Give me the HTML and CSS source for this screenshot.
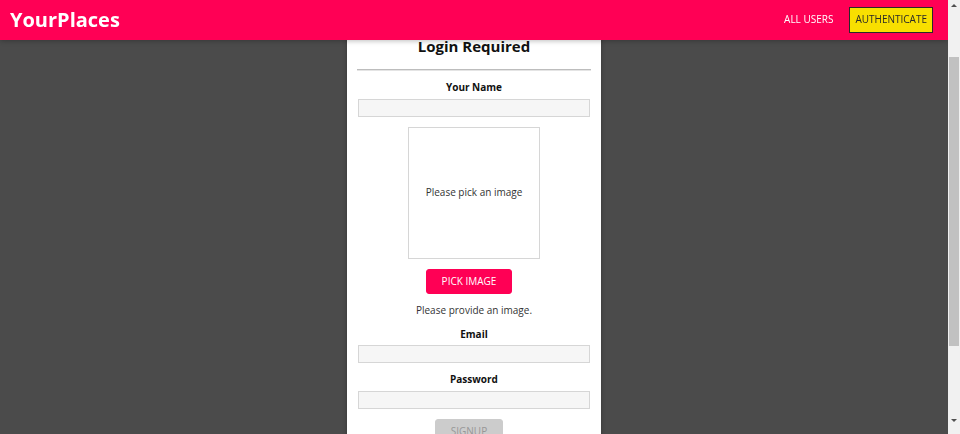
FILE: index.html
```html
<!DOCTYPE html>
<html lang="en">
<head>
<meta charset="utf-8">
<title>YourPlaces</title>
<link rel="stylesheet" href="styles.css">
</head>
<body>
<header class="main-header">
  <h1 class="brand"><a href="#">YourPlaces</a></h1>
  <nav class="main-nav">
    <ul class="nav-links">
      <li><a href="#" class="nav-link">ALL USERS</a></li>
      <li><a href="#" class="nav-link active">AUTHENTICATE</a></li>
    </ul>
  </nav>
</header>
<main class="page">
  <div class="card auth">
    <h2 class="auth-title">Login Required</h2>
    <hr class="divider">
    <form class="auth-form">
      <div class="form-control">
        <label class="field-label" for="name">Your Name</label>
        <input class="field-input" id="name" type="text">
      </div>
      <div class="form-control">
        <div class="image-upload">
          <div class="image-preview"><p class="preview-text">Please pick an image</p></div>
          <button type="button" class="btn">PICK IMAGE</button>
        </div>
        <p class="hint">Please provide an image.</p>
      </div>
      <div class="form-control">
        <label class="field-label" for="email">Email</label>
        <input class="field-input" id="email" type="email">
      </div>
      <div class="form-control">
        <label class="field-label" for="password">Password</label>
        <input class="field-input" id="password" type="password">
      </div>
      <button type="submit" class="btn" disabled>SIGNUP</button>
    </form>
    <button type="button" class="btn btn-inverse">SWITCH TO LOGIN</button>
  </div>
</main>
<div class="scrollbar" aria-hidden="true">
  <div class="sb-btn sb-up"><span class="arrow-up"></span></div>
  <div class="sb-track"><div class="sb-thumb"></div></div>
  <div class="sb-btn sb-down"><span class="arrow-down"></span></div>
</div>
<script src="script.js"></script>
</body>
</html>
```

FILE: styles.css
```css
* { box-sizing: border-box; }

html { scroll-behavior: auto; }

body {
  margin: 0 12px 0 0;
  background: #4b4b4b;
  font-family: "Open Sans", "DejaVu Sans", sans-serif;
  font-size: 10px;
  color: #222;
}

.main-header {
  position: fixed;
  top: 0;
  left: 0;
  right: 12px;
  height: 40px;
  z-index: 5;
  background: #ff0055;
  box-shadow: 0 1px 5px rgba(0, 0, 0, 0.26);
  display: flex;
  align-items: center;
  justify-content: space-between;
  padding: 0 10px;
}

.brand {
  margin: 0;
  font-size: 20px;
  font-weight: 700;
  line-height: 1.36;
}

.brand a {
  color: #fff;
  text-decoration: none;
}

.nav-links {
  list-style: none;
  margin: 0;
  padding: 0;
  display: flex;
  align-items: center;
}

.nav-links li { margin: 0 5px; }

.nav-link {
  display: block;
  font-size: 10px;
  line-height: 13.6px;
  color: #fff;
  text-decoration: none;
  padding: 5px;
  border: 1px solid transparent;
}

.nav-link.active {
  background: #f8df00;
  border-color: #292929;
  color: #292929;
}

.page {
  padding: 70px 0;
}

.card {
  background: #fff;
  border-radius: 4px;
  box-shadow: 0 1px 5px rgba(0, 0, 0, 0.26);
  padding: 10px;
}

.auth {
  width: 254px;
  margin: 0 auto;
  text-align: center;
}

.auth-title {
  margin: 12.5px 0 13px;
  font-size: 15px;
  font-weight: 700;
  line-height: 20.4px;
  color: #111;
}

.divider {
  margin: 0;
  border: 0;
  border-top: 1px solid #bdbdbd;
  border-bottom: 1px solid #e4e4e4;
}

.auth-form { margin: 0; }

.form-control { margin: 10px 0; }

.field-label {
  display: block;
  font-weight: 700;
  line-height: 13.6px;
  margin-bottom: 4px;
  color: #111;
}

.field-input {
  display: block;
  width: calc(100% - 2px);
  margin: 0 auto;
  font: inherit;
  line-height: 13.6px;
  height: 18px;
  border: 1px solid #d6d6d6;
  background: #f6f6f6;
  padding: 1px 2px;
}

.image-upload {
  display: flex;
  flex-direction: column;
  align-items: center;
}

.image-preview {
  width: 132px;
  height: 132px;
  border: 1px solid #d6d6d6;
  display: flex;
  align-items: center;
  justify-content: center;
  margin-bottom: 10px;
}

.preview-text {
  margin: 0;
  line-height: 13.6px;
  color: #333;
}

.hint {
  margin: 10px 0;
  line-height: 13.6px;
  color: #333;
}

.btn {
  font: inherit;
  line-height: 13.6px;
  padding: 5px 15px;
  border: 1px solid #ff0055;
  border-radius: 3px;
  background: #ff0055;
  color: #fff;
  margin-right: 10px;
  cursor: pointer;
}

.btn:disabled {
  background: #ccc;
  color: #979797;
  border-color: #ccc;
  cursor: not-allowed;
}

.btn-inverse {
  background: transparent;
  color: #ff0055;
  margin-top: 2px;
}

/* imitation of the browser's classic scrollbar */
.scrollbar {
  position: fixed;
  top: 0;
  right: 0;
  width: 12px;
  height: 100%;
  z-index: 10;
  background: #f1f1f1;
  display: flex;
  flex-direction: column;
}

.sb-btn {
  display: flex;
  justify-content: center;
}

.sb-up {
  height: 12px;
  padding-top: 4px;
}

.sb-down {
  height: 18px;
  padding-top: 3px;
}

.arrow-up,
.arrow-down {
  width: 0;
  height: 0;
  border-left: 3px solid transparent;
  border-right: 3px solid transparent;
}

.arrow-up { border-bottom: 3px solid #505050; }
.arrow-down { border-top: 3px solid #505050; }

.sb-track {
  flex: 1;
  padding: 45px 1px 0 1px;
}

.sb-thumb {
  height: 289px;
  background: #c1c1c1;
}
```

FILE: script.js
```js
function settle() { window.scrollTo(0, 57); }
settle();
window.addEventListener('load', settle);
```
